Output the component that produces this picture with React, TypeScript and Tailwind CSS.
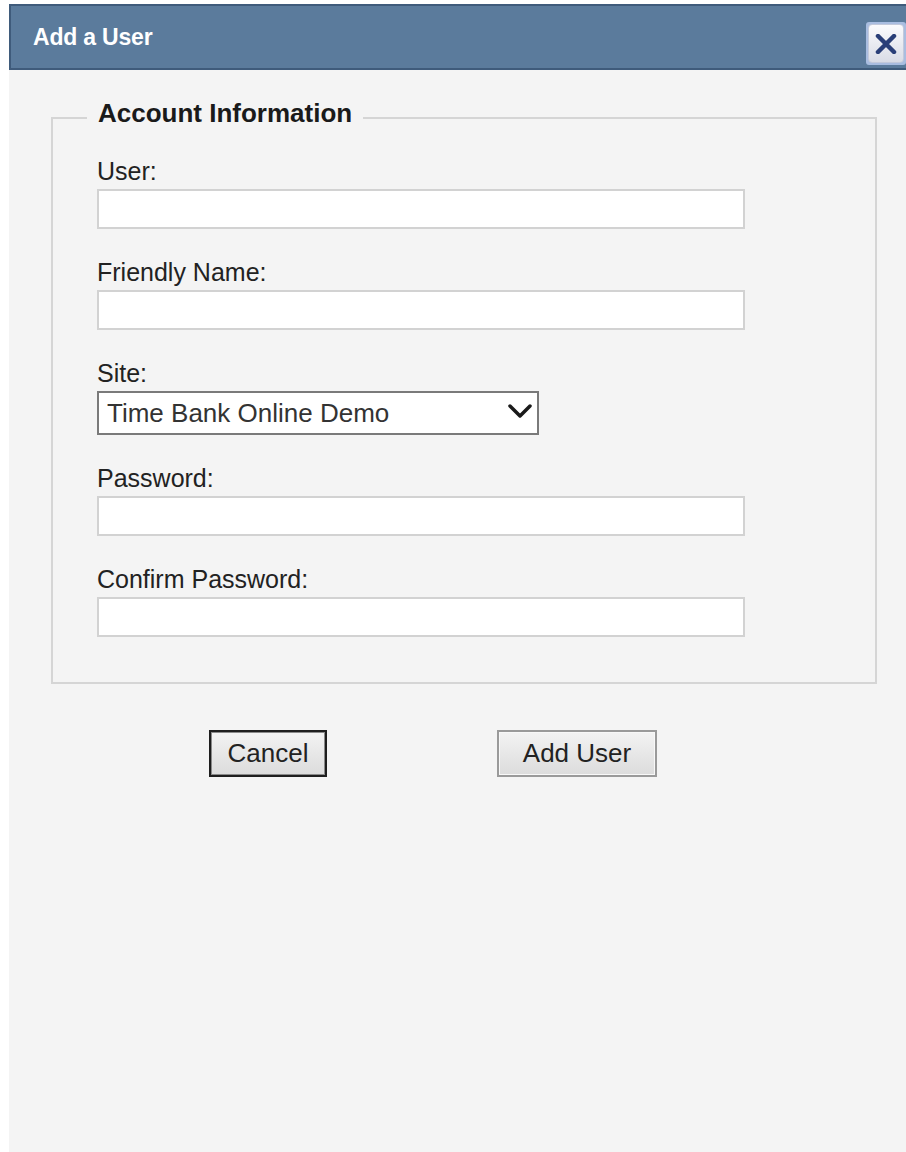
import React from 'react';

type FieldProps = {
  label: string;
  type?: string;
  first?: boolean;
};

const TextField: React.FC<FieldProps> = ({ label, type = 'text', first }) => (
  <div className={first ? 'pt-[3px]' : 'mt-[29px]'}>
    <label className="block h-[28px] text-[25px] leading-[28px] text-[#222]">{label}</label>
    <input
      type={type}
      className="mt-[4px] block h-[40px] w-[648px] border-2 border-[#d2d2d2] bg-white outline-none"
    />
  </div>
);

const SiteSelect: React.FC = () => (
  <div className="mt-[29px]">
    <label className="block h-[28px] text-[25px] leading-[28px] text-[#222]">Site:</label>
    <div className="relative mt-[4px] w-[442px]">
      <select
        defaultValue="demo"
        className="block h-[44px] w-full appearance-none border-2 border-[#7a7a7a] bg-white pl-[8px] text-[26px] text-[#333] outline-none"
      >
        <option value="demo">Time Bank Online Demo</option>
      </select>
      <svg
        className="pointer-events-none absolute right-[7px] top-[12px]"
        width="24"
        height="16"
        viewBox="0 0 24 16"
        fill="none"
      >
        <path d="M2 3 L12 13 L22 3" stroke="#1a1a1a" strokeWidth="3.5" strokeLinecap="round" strokeLinejoin="round" />
      </svg>
    </div>
  </div>
);

const CloseButton: React.FC = () => (
  <button
    aria-label="Close"
    className="mb-[3px] flex h-[43px] w-[40px] items-center justify-center self-end rounded-[3px] bg-[#a9bde0] p-[2px]"
  >
    <span className="flex h-full w-full items-center justify-center rounded-[4px] border border-[#c3c9db] bg-gradient-to-b from-[#fbfbfd] to-[#d9dce6]">
      <svg width="22" height="20" viewBox="0 0 22 20" fill="none">
        <path d="M3 2 L19 18 M19 2 L3 18" stroke="#2a3f78" strokeWidth="4.5" strokeLinecap="round" />
      </svg>
    </span>
  </button>
);

export default function App() {
  return (
    <div className="min-h-[1152px] bg-white pl-[9px] pt-[4px] font-['Liberation_Sans',Arial,sans-serif]">
      <div className="flex min-h-[1148px] flex-col bg-[#f4f4f4]">
        <header className="flex h-[66px] justify-between border-2 border-r-0 border-[#3f5b7b] bg-[#5b7b9c]">
          <h1 className="self-center pl-[22px] text-[23px] font-bold tracking-[-0.2px] text-white">Add a User</h1>
          <CloseButton />
        </header>

        <fieldset className="ml-[42px] mr-[29px] mt-[28px] border-2 border-[#d5d5d5] pb-[45px] pl-[44px] pr-[44px] pt-[16px]">
          <legend className="-ml-[10px] px-[11px] pb-[10px] text-[26px] font-bold leading-[30px] text-[#1a1a1a]">
            Account Information
          </legend>
          <TextField label="User:" first />
          <TextField label="Friendly Name:" />
          <SiteSelect />
          <TextField label="Password:" type="password" />
          <TextField label="Confirm Password:" type="password" />
        </fieldset>

        <div className="ml-[200px] mt-[46px] flex gap-[170px]">
          <button className="h-[47px] w-[118px] border-2 border-[#1e1e1e] bg-gradient-to-b from-[#f3f3f3] to-[#dcdcdc] text-[26px] text-[#222] shadow-[inset_0_0_0_1px_#8a8a8a]">
            Cancel
          </button>
          <button className="h-[47px] w-[160px] border-2 border-[#9a9a9a] bg-gradient-to-b from-[#f3f3f3] to-[#dcdcdc] text-[26px] text-[#222] shadow-[inset_0_0_0_1px_#f8f8f8]">
            Add User
          </button>
        </div>
      </div>
    </div>
  );
}
